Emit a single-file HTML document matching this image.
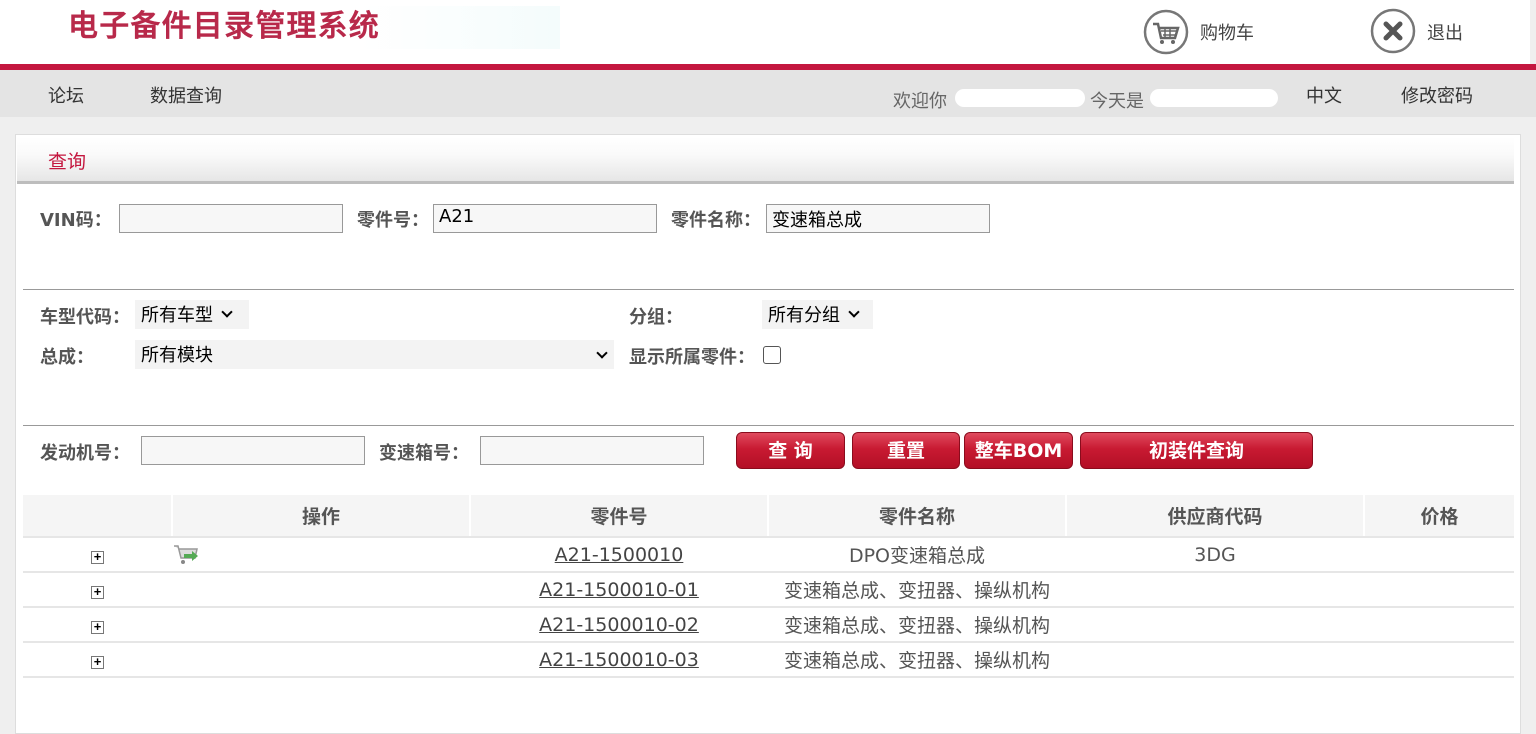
<!DOCTYPE html>
<html><head><meta charset="utf-8"><style>
*{margin:0;padding:0;box-sizing:border-box}
body{width:1536px;height:729px;overflow:hidden;background:#efefef;font-family:"Liberation Sans","Noto Sans CJK SC",sans-serif;color:#333;position:relative}
.a{position:absolute}
.hdr{left:0;top:0;width:1530px;height:64px;background:#fff}
.red{left:0;top:64px;width:1536px;height:6px;background:#c4173f}
.nav{left:0;top:70px;width:1536px;height:47px;background:#e4e4e4;font-size:17px}
.panel{left:15px;top:134px;width:1506px;height:600px;background:#fff;border:1px solid #ddd}
.tbar{left:17px;top:137px;width:1497px;height:47px;background:linear-gradient(#fff,#fafafa 40%,#e6e6e6);border-bottom:3px solid #bdbdbd}
.lbl{font-weight:bold;font-size:18px;color:#555;font-family:"DejaVu Sans","Noto Sans CJK SC",sans-serif}
.inp{height:29px;border:1px solid #999;background:#f7f7f7;font-size:18px;color:#000;padding:1px 5px;font-family:"DejaVu Sans","Noto Sans CJK SC",sans-serif}
.sel{background:#f3f3f3;height:29px;font-size:18px;color:#000;padding:1px 6px}
.hr{height:1px;background:#999;left:23px;width:1491px}
.btn{top:432px;height:37px;border-radius:6px;background:linear-gradient(#e04a5e,#c81a32 45%,#b30f26);border:1px solid #8a0c1d;color:#fff;font-weight:bold;font-size:19px;text-align:center;line-height:37px;font-family:"DejaVu Sans","Noto Sans CJK SC",sans-serif}
table{position:absolute;left:23px;top:495px;width:1491px;border-collapse:collapse;font-size:19px;font-family:"DejaVu Sans","Noto Sans CJK SC",sans-serif}
th{background:#f5f5f5;height:42px;color:#555;font-weight:bold;border-left:2px solid #fff;border-bottom:2px solid #e6e6e6}
td{height:35px;border-bottom:2px solid #e6e6e6;text-align:center;color:#555}
td a{color:#444;text-decoration:underline}
.pl{display:inline-block;width:13px;height:13px;border:1px solid #777;font-size:13px;line-height:10px;font-weight:bold;color:#000;text-align:center;font-family:"Liberation Sans",sans-serif}
.chev{display:inline-block;width:8px;height:8px;border-right:2px solid #000;border-bottom:2px solid #000;transform:rotate(45deg);margin-left:10px;vertical-align:5px}
</style></head><body>
<div class="a hdr"></div>
<div class="a" style="left:58px;top:6px;width:502px;height:43px;background:linear-gradient(90deg,#fff 60%,#f4fcfc)"></div>
<div class="a" style="left:68px;top:1px;font-size:30px;color:#b8294a;font-weight:500;letter-spacing:1.2px;-webkit-text-stroke:0.6px #b8294a">电子备件目录管理系统</div>
<svg class="a" style="left:1143px;top:9px" width="46" height="46" viewBox="0 0 46 46"><circle cx="23" cy="23" r="21" fill="#fff" stroke="#777" stroke-width="2.5"/><path d="M10 15h5l3 14h14l3-10H16" fill="none" stroke="#666" stroke-width="2.5"/><path d="M18 22h15M20 26h12M22 19v10M27 19v10" stroke="#666" stroke-width="1.5"/><circle cx="19" cy="33" r="2" fill="#666"/><circle cx="30" cy="33" r="2" fill="#666"/></svg>
<div class="a" style="left:1200px;top:19px;font-size:18px;color:#444">购物车</div>
<svg class="a" style="left:1370px;top:8px" width="46" height="46" viewBox="0 0 46 46"><circle cx="23" cy="23" r="21" fill="#fff" stroke="#777" stroke-width="2.5"/><path d="M16 16l14 14M30 16L16 30" stroke="#555" stroke-width="5" stroke-linecap="round"/></svg>
<div class="a" style="left:1427px;top:19px;font-size:18px;color:#444">退出</div>
<div class="a red"></div>
<div class="a nav"></div>
<div class="a" style="left:48px;top:82px;font-size:18px">论坛</div>
<div class="a" style="left:150px;top:82px;font-size:18px">数据查询</div>
<div class="a" style="left:893px;top:87px;font-size:18px;color:#666">欢迎你</div>
<div class="a" style="left:955px;top:89px;width:130px;height:18px;background:#fff;border-radius:9px"></div>
<div class="a" style="left:1090px;top:87px;font-size:18px;color:#666">今天是</div>
<div class="a" style="left:1150px;top:89px;width:128px;height:18px;background:#fff;border-radius:9px"></div>
<div class="a" style="left:1306px;top:82px;font-size:18px">中文</div>
<div class="a" style="left:1401px;top:82px;font-size:18px">修改密码</div>

<div class="a panel"></div>
<div class="a tbar"></div>
<div class="a" style="left:48px;top:147px;font-size:19px;color:#c4173f">查询</div>

<div class="a lbl" style="left:40px;top:206px">VIN码：</div>
<div class="a inp" style="left:119px;top:204px;width:224px"></div>
<div class="a lbl" style="left:357px;top:206px">零件号：</div>
<div class="a inp" style="left:433px;top:204px;width:224px">A21</div>
<div class="a lbl" style="left:671px;top:206px">零件名称：</div>
<div class="a inp" style="left:766px;top:204px;width:224px">变速箱总成</div>
<div class="a hr" style="top:289px"></div>

<div class="a lbl" style="left:40px;top:303px">车型代码：</div>
<div class="a sel" style="left:135px;top:300px;width:114px">所有车型<span class="chev"></span></div>
<div class="a lbl" style="left:629px;top:303px">分组：</div>
<div class="a sel" style="left:762px;top:300px;width:111px">所有分组<span class="chev"></span></div>
<div class="a lbl" style="left:40px;top:343px">总成：</div>
<div class="a sel" style="left:135px;top:340px;width:479px">所有模块<span class="chev" style="position:absolute;right:8px;top:9px"></span></div>
<div class="a lbl" style="left:629px;top:343px">显示所属零件：</div>
<div class="a" style="left:763px;top:346px;width:18px;height:18px;border:1.5px solid #555;border-radius:3px;background:#fff"></div>
<div class="a hr" style="top:425px"></div>

<div class="a lbl" style="left:40px;top:439px">发动机号：</div>
<div class="a inp" style="left:141px;top:436px;width:224px"></div>
<div class="a lbl" style="left:379px;top:439px">变速箱号：</div>
<div class="a inp" style="left:480px;top:436px;width:224px"></div>
<div class="a btn" style="left:736px;width:109px">查 询</div>
<div class="a btn" style="left:852px;width:108px">重置</div>
<div class="a btn" style="left:964px;width:109px">整车BOM</div>
<div class="a btn" style="left:1080px;width:233px">初装件查询</div>

<table>
<tr><th style="width:149px;border-left:0"></th><th style="width:298px">操作</th><th style="width:298px">零件号</th><th style="width:298px">零件名称</th><th style="width:298px">供应商代码</th><th>价格</th></tr>
<tr><td><span class="pl">+</span></td><td style="text-align:left"><svg width="28" height="26" viewBox="0 0 28 26" style="vertical-align:middle"><path d="M2 4h4l3 12h14l2-9H7" fill="#ddd" stroke="#999" stroke-width="1.5"/><circle cx="11" cy="20" r="2" fill="#888"/><path d="M12 12h8v-3l6 5-6 5v-3h-8z" fill="#5a5"/></svg></td><td><a>A21-1500010</a></td><td>DPO变速箱总成</td><td>3DG</td><td></td></tr>
<tr><td><span class="pl">+</span></td><td></td><td><a>A21-1500010-01</a></td><td>变速箱总成、变扭器、操纵机构</td><td></td><td></td></tr>
<tr><td><span class="pl">+</span></td><td></td><td><a>A21-1500010-02</a></td><td>变速箱总成、变扭器、操纵机构</td><td></td><td></td></tr>
<tr><td><span class="pl">+</span></td><td></td><td><a>A21-1500010-03</a></td><td>变速箱总成、变扭器、操纵机构</td><td></td><td></td></tr>
</table>
</body></html>
